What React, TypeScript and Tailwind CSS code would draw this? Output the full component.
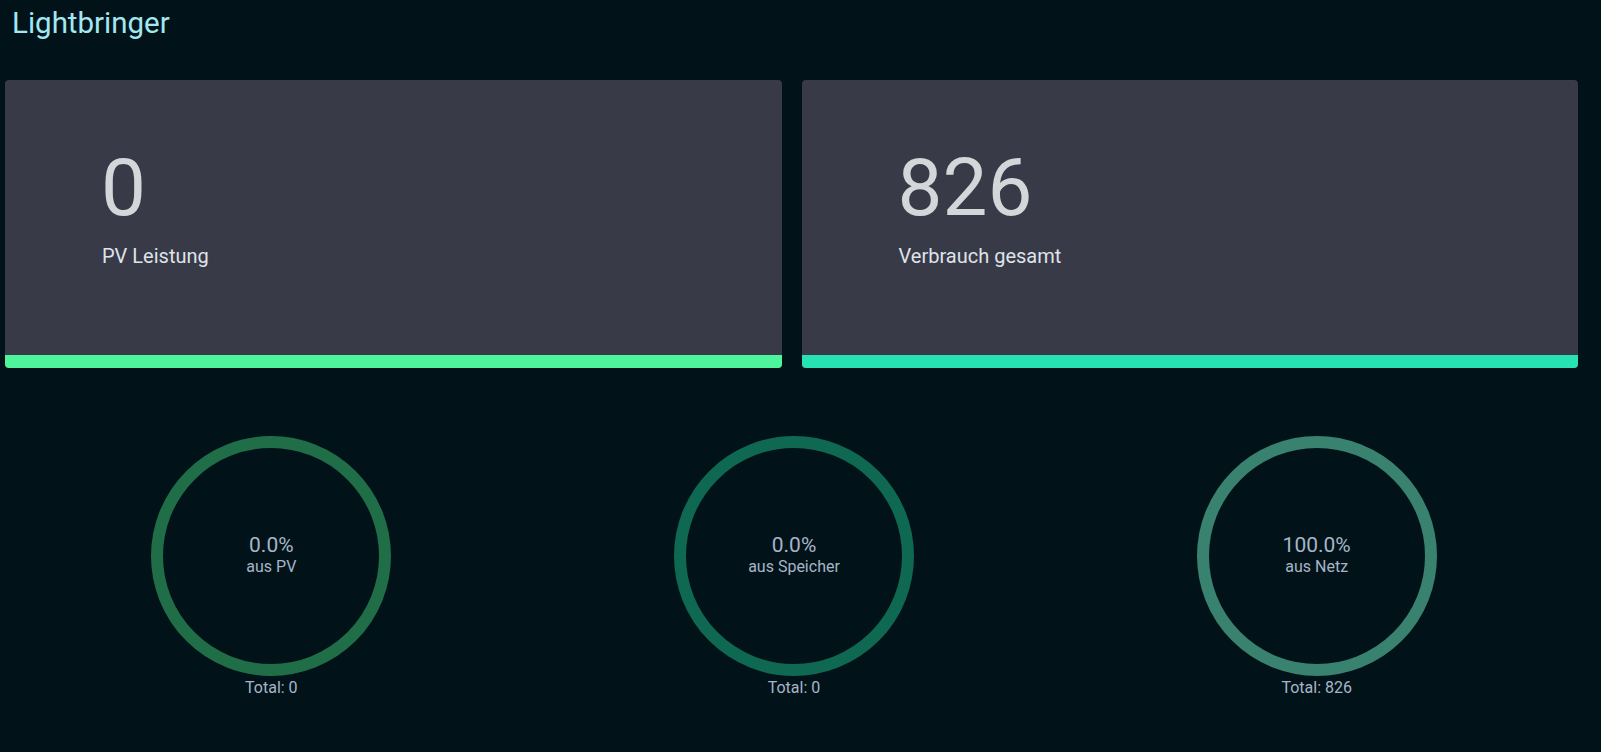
import React from "react";

const stats = [
  { value: "0", label: "PV Leistung", bar: "bg-[#4ef59a]" },
  { value: "826", label: "Verbrauch gesamt", bar: "bg-[#27e3b4]" },
];

const rings = [
  { pct: "0.0%", label: "aus PV", total: "Total: 0", stroke: "#1f6e47" },
  { pct: "0.0%", label: "aus Speicher", total: "Total: 0", stroke: "#0f6852" },
  { pct: "100.0%", label: "aus Netz", total: "Total: 826", stroke: "#38826f" },
];

type StatProps = { value: string; label: string; bar: string };

const Card = ({ value, label, bar }: StatProps) => {
  return (
    <div className="flex-1 h-[288px] flex flex-col rounded overflow-hidden bg-[#393a47]">
      <div className="flex-1 pl-[97px] pt-[68px]">
        <div className="text-[80px] leading-none text-[#d5d6d9] -ml-px">{value}</div>
        <div className="mt-[14px] text-xl text-[#dfe3ea]">{label}</div>
      </div>
      <div className={`h-[13px] ${bar}`} />
    </div>
  );
};

type RingProps = { pct: string; label: string; total: string; stroke: string };

const Ring = ({ pct, label, total, stroke }: RingProps) => {
  return (
    <div className="flex-1 flex flex-col items-center">
      <div className="relative w-[240px] h-[240px]">
        <svg width="240" height="240" viewBox="0 0 240 240" className="absolute inset-0">
          <circle cx="120" cy="120" r="114" fill="none" stroke={stroke} strokeWidth="12" />
        </svg>
        <div className="absolute inset-0 flex flex-col items-center justify-center pb-[3px] text-[#a7b5c8]">
          <span className="text-[21px] leading-[23px]">{pct}</span>
          <span className="text-[16px] leading-[19px]">{label}</span>
        </div>
      </div>
      <div className="text-[16px] leading-6 text-[#a7b5c8]">{total}</div>
    </div>
  );
};

export default function App() {
  return (
    <div className="min-h-screen bg-[#011318] font-['Roboto',sans-serif]">
      <h1 className="pl-[12px] pt-[5px] text-[29.5px] leading-9 text-[#a2e8f2]">Lightbringer</h1>
      <div className="mt-[39px] flex gap-5 pl-[5px] pr-[23px]">
        {stats.map((s) => (
          <Card key={s.label} {...s} />
        ))}
      </div>
      <div className="mt-[68px] flex pl-[10px] pr-[23px]">
        {rings.map((r) => (
          <Ring key={r.label} {...r} />
        ))}
      </div>
    </div>
  );
}
